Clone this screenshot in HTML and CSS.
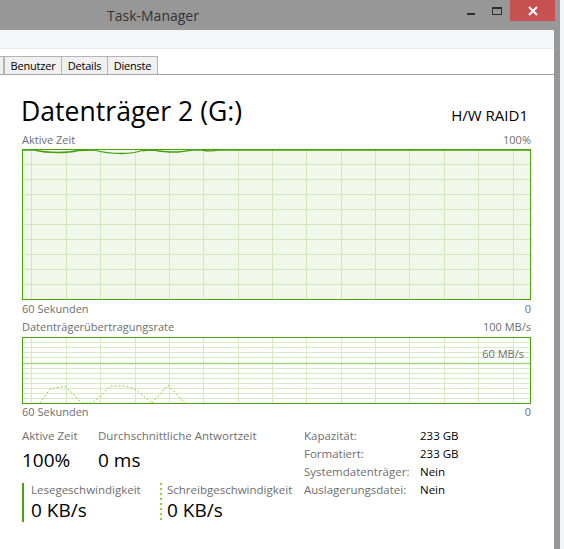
FILE: index.html
```html
<!DOCTYPE html>
<html lang="de">
<head>
<meta charset="utf-8">
<title>Task-Manager</title>
<link rel="stylesheet" href="styles.css">
</head>
<body>
<div class="screen">
  <div class="window">
    <div class="titlebar">
      <span class="title">Task-Manager</span>
      <div class="controls">
        <span class="btn-min"></span>
        <span class="btn-max"></span>
        <span class="btn-close">
          <svg width="10" height="10" viewBox="0 0 10 10"><path d="M1 1L9 9M9 1L1 9" stroke="#fff" stroke-width="2" fill="none"/></svg>
        </span>
      </div>
    </div>
    <div class="frame">
      <div class="menubar"></div>
      <div class="tabs">
        <span class="tab tab-cut"></span>
        <span class="tab tab-users">Benutzer</span>
        <span class="tab tab-details">Details</span>
        <span class="tab tab-services">Dienste</span>
      </div>
      <div class="content">
        <div class="head">
          <h1 class="disk-name">Datenträger 2 (G:)</h1>
          <span class="disk-type">H/W RAID1</span>
        </div>
        <div class="axis-row top-row"><span>Aktive Zeit</span><span>100%</span></div>
        <svg class="chart" width="509" height="151" viewBox="0 0 509 151">
          <rect x="0.5" y="0.5" width="508" height="150" fill="#f1f7ea"/>
          <g stroke="#d2e8bc" stroke-width="1">
            <path d="M9.5 0V151M44.5 0V151M78.5 0V151M113.5 0V151M147.5 0V151M181.5 0V151M216.5 0V151M250.5 0V151M284.5 0V151M319.5 0V151M353.5 0V151M387.5 0V151M422.5 0V151M456.5 0V151M491.5 0V151"/>
            <path d="M0 15.5H509M0 30.5H509M0 45.5H509M0 60.5H509M0 75.5H509M0 90.5H509M0 105.5H509M0 120.5H509M0 135.5H509"/>
          </g>
          <path d="M0 1L12 1Q22 3.5 36 3.5Q48 3.5 56 1.5L72 1Q84 4.5 100 4.5Q112 4.5 120 1.5L132 1Q142 3.2 156 3Q164 2.5 170 1.2L180 1Q188 2.6 196 1.2L509 1" fill="none" stroke="#45a00a" stroke-width="1.3"/>
          <rect x="0.5" y="0.5" width="508" height="150" fill="none" stroke="#4ba30e"/>
        </svg>
        <div class="axis-row bottom-row"><span>60 Sekunden</span><span>0</span></div>
        <div class="axis-row second-row"><span>Datenträgerübertragungsrate</span><span>100 MB/s</span></div>
        <svg class="chart chart-rate" width="509" height="67" viewBox="0 0 509 67">
          <rect x="0.5" y="0.5" width="508" height="66" fill="#ffffff"/>
          <g stroke="#d6ebc3" stroke-width="1">
            <path d="M9.5 0V67M44.5 0V67M78.5 0V67M113.5 0V67M147.5 0V67M181.5 0V67M216.5 0V67M250.5 0V67M284.5 0V67M319.5 0V67M353.5 0V67M387.5 0V67M422.5 0V67M456.5 0V67M491.5 0V67"/>
            <path d="M0 5.5H509M0 10.5H509M0 15.5H509M0 20.5H509M0 31.5H509M0 36.5H509M0 41.5H509M0 46.5H509M0 51.5H509M0 56.5H509M0 61.5H509"/>
          </g>
          <path d="M0 26.5H509" stroke="#a6d47f" stroke-width="1.3"/>
          <text x="502" y="21" text-anchor="end" class="chart-label">60 MB/s</text>
          <path d="M18 66L28 52L43 49L60 66L70 66L78 60L88 49L103 49L113 52L130 66M130 66L146 48L163 66" fill="none" stroke="#8dd13b" stroke-width="1" stroke-dasharray="2 2"/>
          <rect x="0.5" y="0.5" width="508" height="66" fill="none" stroke="#4ba30e"/>
        </svg>
        <div class="axis-row bottom-row2"><span>60 Sekunden</span><span>0</span></div>
        <div class="stats">
          <div class="stats-left">
            <div class="stat-pair">
              <div class="stat">
                <div class="stat-label">Aktive Zeit</div>
                <div class="stat-value">100%</div>
              </div>
              <div class="stat">
                <div class="stat-label">Durchschnittliche Antwortzeit</div>
                <div class="stat-value">0 ms</div>
              </div>
            </div>
            <div class="speed-pair">
              <div class="speed speed-read">
                <div class="stat-label">Lesegeschwindigkeit</div>
                <div class="stat-value">0 KB/s</div>
              </div>
              <div class="speed speed-write">
                <div class="stat-label">Schreibgeschwindigkeit</div>
                <div class="stat-value">0 KB/s</div>
              </div>
            </div>
          </div>
          <dl class="props">
            <dt>Kapazität:</dt><dd>233 GB</dd>
            <dt>Formatiert:</dt><dd>233 GB</dd>
            <dt>Systemdatenträger:</dt><dd>Nein</dd>
            <dt>Auslagerungsdatei:</dt><dd>Nein</dd>
          </dl>
        </div>
      </div>
    </div>
  </div>
  <div class="desktop"></div>
</div>
</body>
</html>
```
FILE: styles.css
```css
html, body {
  margin: 0;
  padding: 0;
}
body {
  width: 564px;
  height: 549px;
  overflow: hidden;
  background: #eef1f4;
  font-family: "Segoe UI", "Open Sans", "Noto Sans", sans-serif;
  color: #000;
}
.screen {
  display: flex;
  height: 549px;
}
.window {
  width: 560px;
  background: #979797;
  display: flex;
  flex-direction: column;
}
.desktop {
  flex: 1;
  background: #f3f5f7;
}
.titlebar {
  height: 30px;
  display: flex;
  flex-shrink: 0;
}
.title {
  padding-left: 107px;
  line-height: 31px;
  font-size: 14px;
  color: #333;
}
.controls {
  margin-left: auto;
  margin-right: 5px;
  display: flex;
  align-items: flex-start;
}
.btn-min {
  width: 8px;
  height: 2px;
  background: #2f2f2f;
  margin-top: 13px;
}
.btn-max {
  width: 10px;
  height: 8px;
  box-sizing: border-box;
  border: 1px solid #2f2f2f;
  border-top-width: 2px;
  margin-top: 7px;
  margin-left: 17px;
}
.btn-close {
  width: 45px;
  height: 21px;
  margin-left: 8px;
  background: #c75050;
  display: flex;
  align-items: center;
  justify-content: center;
}
.btn-close svg {
  display: block;
}
.frame {
  flex: 1;
  margin-right: 6px;
  background: #fff;
  display: flex;
  flex-direction: column;
}
.menubar {
  height: 18px;
  background: #f5f6f7;
  border-bottom: 1px solid #ebebeb;
}
.tabs {
  display: flex;
  padding-top: 7px;
  border-bottom: 1px solid #a3a3a3;
}
.tab {
  line-height: 17px;
  font-size: 11px;
  letter-spacing: -0.2px;
  text-align: center;
  color: #000;
  background: #f0f0f0;
  border: 1px solid #b4b4b4;
  border-bottom: none;
  box-sizing: border-box;
  height: 18px;
}
.tab-cut {
  width: 4px;
  border-left: none;
}
.tab-users {
  width: 58px;
}
.tab-details {
  width: 46px;
  border-left: none;
}
.tab-services {
  width: 50px;
  border-left: none;
}
.content {
  padding: 0 23px 0 22px;
}
.head {
  display: flex;
  justify-content: space-between;
  align-items: baseline;
  margin-top: 20px;
  height: 32px;
}
.disk-name {
  margin: 0 0 0 -1px;
  font-size: 26.6px;
  line-height: 32px;
  font-weight: 400;
}
.disk-type {
  font-size: 15px;
  margin-right: 3px;
}
.axis-row {
  display: flex;
  justify-content: space-between;
  font-size: 11px;
  line-height: 14px;
  color: #6e6e6e;
}
.top-row {
  margin-top: 6px;
}
.chart {
  display: block;
  margin-top: 2px;
}
.chart-rate {
  margin-top: 3px;
}
.bottom-row {
  margin-top: 2px;
}
.second-row {
  margin-top: 4px;
}
.bottom-row2 {
  margin-top: 1px;
}
.chart-label {
  font-family: "Segoe UI", "Open Sans", "Noto Sans", sans-serif;
  font-size: 11px;
  fill: #6e6e6e;
}
.stats {
  display: flex;
  align-items: flex-start;
  margin-top: 8px;
}
.stats-left {
  width: 282px;
  flex-shrink: 0;
}
.stat-pair {
  display: flex;
  margin-top: 2px;
}
.stat:first-child {
  width: 76px;
}
.stat-label {
  font-size: 11.5px;
  line-height: 14px;
  color: #6e6e6e;
}
.stat-value {
  font-size: 19px;
  line-height: 24px;
  margin-top: 5px;
}
.speed-pair {
  display: flex;
  margin-top: 11px;
}
.speed {
  height: 39px;
  padding-left: 7px;
  position: relative;
}
.speed .stat-label {
  line-height: 13px;
}
.speed .stat-value {
  margin-top: 2px;
}
.speed-read {
  width: 129px;
  border-left: 2px solid #4ba30e;
}
.speed-write {
  padding-left: 7px;
}
.speed-write::before {
  content: "";
  position: absolute;
  left: 0;
  top: 0;
  width: 2px;
  height: 39px;
  background: repeating-linear-gradient(to bottom, #8dd13b 0 2px, transparent 2px 5px);
}
.props {
  margin: 0;
  display: grid;
  grid-template-columns: 116px auto;
  align-content: start;
  font-size: 11.5px;
  line-height: 18px;
}
.props dt {
  color: #6e6e6e;
}
.props dd {
  margin: 0;
  color: #000;
}
```
